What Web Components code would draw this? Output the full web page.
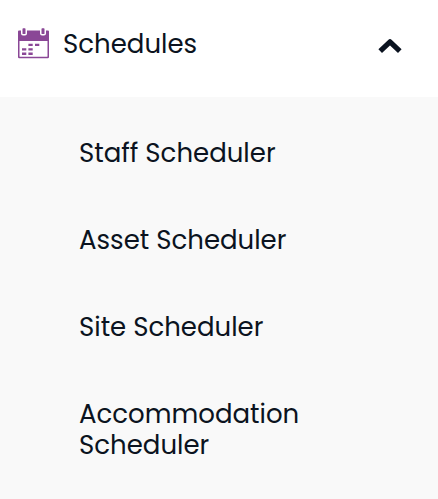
<!DOCTYPE html>
<html lang="en">
<head>
<meta charset="utf-8">
<title>Schedules</title>
<style>
body { margin: 0; background: #fff; color: #0b1320; font: 26px/31px Poppins, Inter, "Open Sans", sans-serif; }
</style>
</head>
<body>
<nav-group label="Schedules">
  <calendar-icon slot="icon"></calendar-icon>
  <nav-entry href="#staff">Staff Scheduler</nav-entry>
  <nav-entry href="#asset">Asset Scheduler</nav-entry>
  <nav-entry href="#site">Site Scheduler</nav-entry>
  <nav-entry href="#accommodation">Accommodation Scheduler</nav-entry>
</nav-group>
<script>
class CalendarIcon extends HTMLElement {
  constructor() {
    super();
    this.attachShadow({ mode: 'open' }).innerHTML = `
      <style>:host { display: block; width: 32px; height: 32px; } svg { display: block; }</style>
      <svg width="32" height="32" viewBox="0 0 32 32" fill="#8a4796" aria-hidden="true">
        <path fill-rule="evenodd" d="M0 3.5Q0 2.5 1 2.5H30Q31 2.5 31 3.5V29Q31 30.3 29.7 30.3H1.3Q0 30.3 0 29ZM1.5 13V28.2Q1.5 28.8 2.1 28.8H28.9Q29.5 28.8 29.5 28.2V13Z"/>
        <path fill="#fff" d="M3 0H9V5.5Q9 7.5 7 7.5H5Q3 7.5 3 5.5ZM22 0H28V5.5Q28 7.5 26 7.5H24Q22 7.5 22 5.5Z"/>
        <rect x="4.5" y="0.3" width="3" height="5.8" rx=".7"/>
        <rect x="23.5" y="0.3" width="3" height="5.8" rx=".7"/>
        <path d="M10.4 15.7h4.3v2.3h-4.3zM17 15.7h4.3v2.3H17zM4 20.2h4.3v2.3H4zM10.4 20.2h4.3v2.3h-4.3zM4 24.6h4.3v2.3H4zM10.4 24.6h4.3v2.3h-4.3z"/>
      </svg>`;
  }
}
class NavEntry extends HTMLElement {
  constructor() {
    super();
    this.attachShadow({ mode: 'open' }).innerHTML = `
      <style>
        :host { display: block; }
        a { display: block; padding: 28px 79px; color: inherit; text-decoration: none; }
      </style>
      <a><slot></slot></a>`;
    this.shadowRoot.querySelector('a').href = this.getAttribute('href');
  }
}
class NavGroup extends HTMLElement {
  constructor() {
    super();
    this.attachShadow({ mode: 'open' }).innerHTML = `
      <style>
        :host { display: flex; flex-direction: column; min-height: 100vh; }
        button { display: flex; align-items: center; gap: 13px; width: 100%; padding: 28px 36px 37px 18px;
          border: 0; background: #fff; color: inherit; font: inherit; text-align: left; cursor: pointer; }
        .label { flex: 1; }
        .panel { flex: 1; padding: 13px 0 0; background: #f9f9f9; }
        .panel[hidden] { display: none; }
        .chevron { display: block; margin-top: 4px; }
        button[aria-expanded="false"] .chevron { transform: rotate(180deg); }
      </style>
      <button type="button" aria-expanded="true" aria-controls="panel">
        <slot name="icon"></slot>
        <span class="label"></span>
        <svg class="chevron" width="24" height="16" viewBox="0 0 24 16" fill="none" stroke="#0b1320" stroke-width="5.2" aria-hidden="true">
          <path d="M2.2 13.2L12 3.8L21.8 13.2" stroke-linejoin="round"/>
        </svg>
      </button>
      <div class="panel" id="panel"><slot></slot></div>`;
    this.shadowRoot.querySelector('.label').textContent = this.getAttribute('label');
    const button = this.shadowRoot.querySelector('button');
    const panel = this.shadowRoot.querySelector('.panel');
    button.addEventListener('click', () => {
      panel.hidden = !panel.hidden;
      button.setAttribute('aria-expanded', String(!panel.hidden));
    });
  }
}
customElements.define('calendar-icon', CalendarIcon);
customElements.define('nav-entry', NavEntry);
customElements.define('nav-group', NavGroup);
</script>
</body>
</html>
